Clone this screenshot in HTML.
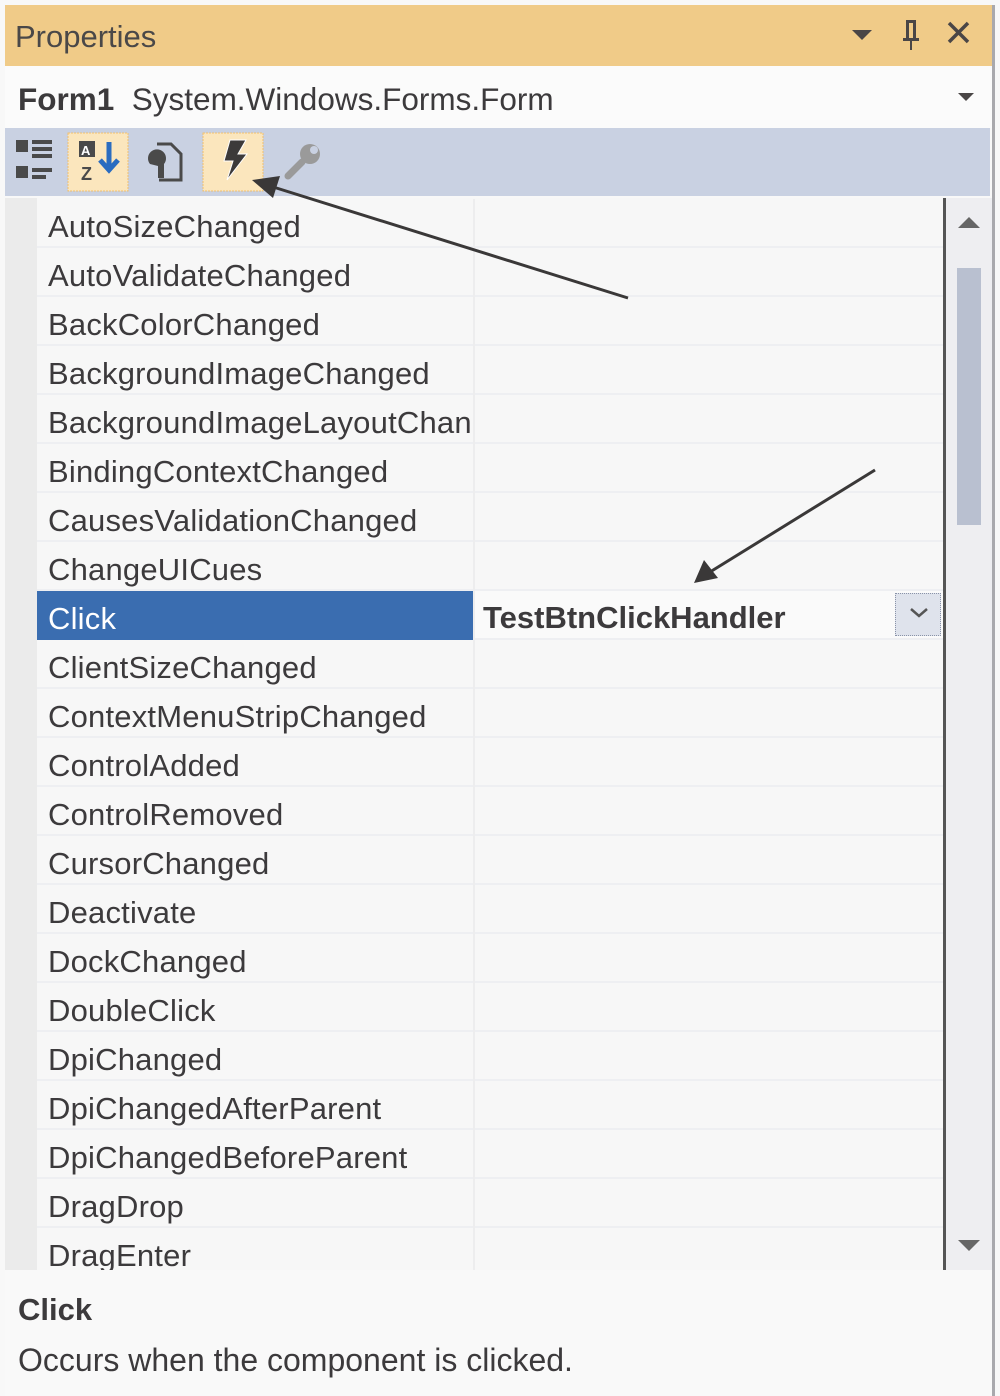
<!DOCTYPE html>
<html><head><meta charset="utf-8"><style>
*{margin:0;padding:0;box-sizing:border-box}
body{width:1000px;height:1396px;background:#f8f8f8;position:relative;overflow:hidden;font-family:"Liberation Sans",sans-serif;color:#3c3a3c}
.abs{position:absolute}
.title{left:5px;top:5px;width:987px;height:61px;background:#f0cb88;font-size:31px;line-height:64px;padding-left:10px;color:#4a4848}
.form{left:5px;top:66px;width:987px;height:62px;background:#fbfbfb;font-size:31.5px;line-height:66px;padding-left:13px}
.tb{left:5px;top:128px;width:985px;height:68px;background:#c9d1e2}
.grid{left:5px;top:198px;width:938px;height:1072px;background:#f7f7f7;overflow:hidden}
.gut{left:0;top:0;width:32px;height:1072px;background:#ebebeb}
.row{position:absolute;left:32px;width:906px;height:49px;border-bottom:2px solid #eeeff2}
.row .n{position:absolute;left:11px;top:0;line-height:55px;height:49px;font-size:31px;white-space:nowrap;width:425px;overflow:hidden;letter-spacing:0.2px}
.row .v{position:absolute;left:436px;top:0;width:2px;height:49px;background:#ededee}
.sb{left:943px;top:198px;width:49px;height:1072px;background:#eeeef1;border-left:3px solid #555}
.desc{left:5px;top:1270px;width:987px;height:126px;background:#f9f9f9}
</style></head><body>
<div class="abs title">Properties</div>
<svg class="abs" style="left:840px;top:15px" width="140" height="40">
<polygon points="12,15 32,15 22,25" fill="#4a4646"/>
<path d="M66,5 h10 v18 h3 v3 h-7 v9 h-2 v-9 h-7 v-3 h3 z M69,8 v15 h4 v-15z" fill="#4a4646"/>
<path d="M109,8 L128,27 M128,8 L109,27" stroke="#4a4646" stroke-width="3.5"/>
</svg>
<div class="abs" style="left:992px;top:5px;width:3px;height:1391px;background:#a9a9ad"></div>
<div class="abs form"><b>Form1</b>&nbsp; System.Windows.Forms.Form</div>
<svg class="abs" style="left:955px;top:90px" width="24" height="16"><polygon points="3,3 19,3 11,11" fill="#4a4646"/></svg>
<div class="abs tb"></div>
<svg class="abs" style="left:5px;top:128px" width="330" height="68">
<rect x="11" y="12" width="12" height="12" fill="#4a4a4a"/><rect x="11" y="38" width="12" height="12" fill="#4a4a4a"/>
<rect x="27" y="12" width="20" height="4" fill="#4a4a4a"/><rect x="27" y="19" width="20" height="4" fill="#4a4a4a"/><rect x="27" y="26" width="20" height="4" fill="#4a4a4a"/>
<rect x="27" y="40" width="20" height="4" fill="#4a4a4a"/><rect x="27" y="47" width="14" height="4" fill="#4a4a4a"/>
<rect x="63" y="5" width="60" height="58" fill="#fbe6bd" stroke="#f0c070" stroke-dasharray="2 1"/>
<rect x="74" y="13" width="16" height="16" fill="#4a4a4a"/><text x="76" y="27" font-size="13" fill="#fff" font-weight="bold">A</text>
<text x="76" y="52" font-size="18" fill="#4a4a4a" font-weight="bold">Z</text>
<path d="M104,14 v26 M95,32 l9,10 l9,-10" stroke="#2a6cc0" stroke-width="5" fill="none"/>
<path d="M152,16 h14 l10,10 v26 h-22" stroke="#4a4a4a" stroke-width="3" fill="none"/>
<path d="M145,36 a9,9 0 1 1 14,0 v14 h-6 v-12z" fill="#4a4a4a"/>
<rect x="198" y="5" width="60" height="58" fill="#fbe6bd" stroke="#f0c070" stroke-dasharray="2 1"/>
<path d="M225,12 h16 l-8,14 h9 l-20,26 l6,-19 h-9z" fill="#3c3a3a" stroke="#fff" stroke-width="1"/>
<path d="M283,48 l14,-14" stroke="#9a9a9a" stroke-width="7" stroke-linecap="round"/>
<circle cx="305" cy="26" r="10" fill="#9a9a9a"/><circle cx="309" cy="22" r="4" fill="#c9d1e2"/>
</svg>
<div class="abs grid">
<div class="abs gut"></div>
<div class="row" style="top:1px"><div class="n">AutoSizeChanged</div><div class="v"></div></div>
<div class="row" style="top:50px"><div class="n">AutoValidateChanged</div><div class="v"></div></div>
<div class="row" style="top:99px"><div class="n">BackColorChanged</div><div class="v"></div></div>
<div class="row" style="top:148px"><div class="n">BackgroundImageChanged</div><div class="v"></div></div>
<div class="row" style="top:197px"><div class="n">BackgroundImageLayoutChanged</div><div class="v"></div></div>
<div class="row" style="top:246px"><div class="n">BindingContextChanged</div><div class="v"></div></div>
<div class="row" style="top:295px"><div class="n">CausesValidationChanged</div><div class="v"></div></div>
<div class="row" style="top:344px"><div class="n">ChangeUICues</div><div class="v"></div></div>
<div class="row" style="top:393px;background:#fafafa"><div class="n" style="background:#3a6db0;color:#fff;left:0;padding-left:11px;width:436px">Click</div><div class="v"></div>
<div class="abs" style="left:446px;top:0;line-height:53px;font-size:31px;font-weight:bold;letter-spacing:0px">TestBtnClickHandler</div>
<div class="abs" style="left:858px;top:2px;width:46px;height:43px;background:#dfe3ec;border:1px dotted #8a93a8"></div>
<svg class="abs" style="left:870px;top:14px" width="24" height="16"><path d="M4,4 l8,7 l8,-7" stroke="#555" stroke-width="2.5" fill="none"/></svg></div>
<div class="row" style="top:442px"><div class="n">ClientSizeChanged</div><div class="v"></div></div>
<div class="row" style="top:491px"><div class="n">ContextMenuStripChanged</div><div class="v"></div></div>
<div class="row" style="top:540px"><div class="n">ControlAdded</div><div class="v"></div></div>
<div class="row" style="top:589px"><div class="n">ControlRemoved</div><div class="v"></div></div>
<div class="row" style="top:638px"><div class="n">CursorChanged</div><div class="v"></div></div>
<div class="row" style="top:687px"><div class="n">Deactivate</div><div class="v"></div></div>
<div class="row" style="top:736px"><div class="n">DockChanged</div><div class="v"></div></div>
<div class="row" style="top:785px"><div class="n">DoubleClick</div><div class="v"></div></div>
<div class="row" style="top:834px"><div class="n">DpiChanged</div><div class="v"></div></div>
<div class="row" style="top:883px"><div class="n">DpiChangedAfterParent</div><div class="v"></div></div>
<div class="row" style="top:932px"><div class="n">DpiChangedBeforeParent</div><div class="v"></div></div>
<div class="row" style="top:981px"><div class="n">DragDrop</div><div class="v"></div></div>
<div class="row" style="top:1030px"><div class="n">DragEnter</div><div class="v"></div></div>
</div>
<div class="abs sb"></div>
<div class="abs" style="left:957px;top:268px;width:24px;height:257px;background:#b9c0d0"></div>
<svg class="abs" style="left:955px;top:210px" width="30" height="1060">
<polygon points="3,18 25,18 14,7" fill="#666"/>
<polygon points="3,1030 25,1030 14,1041" fill="#666"/>
</svg>
<div class="abs desc">
<div class="abs" style="left:13px;top:22px;font-size:31px;font-weight:bold">Click</div>
<div class="abs" style="left:13px;top:72px;font-size:32px">Occurs when the component is clicked.</div>
</div>
<svg class="abs" style="left:0;top:0" width="1000" height="700">
<line x1="628" y1="298" x2="270" y2="186" stroke="#3a3838" stroke-width="3"/>
<polygon points="252,180 280,176 273,198" fill="#3a3838"/>
<line x1="875" y1="470" x2="710" y2="572" stroke="#3a3838" stroke-width="3"/>
<polygon points="694,583 704,560 718,578" fill="#3a3838"/>
</svg>
</body></html>
